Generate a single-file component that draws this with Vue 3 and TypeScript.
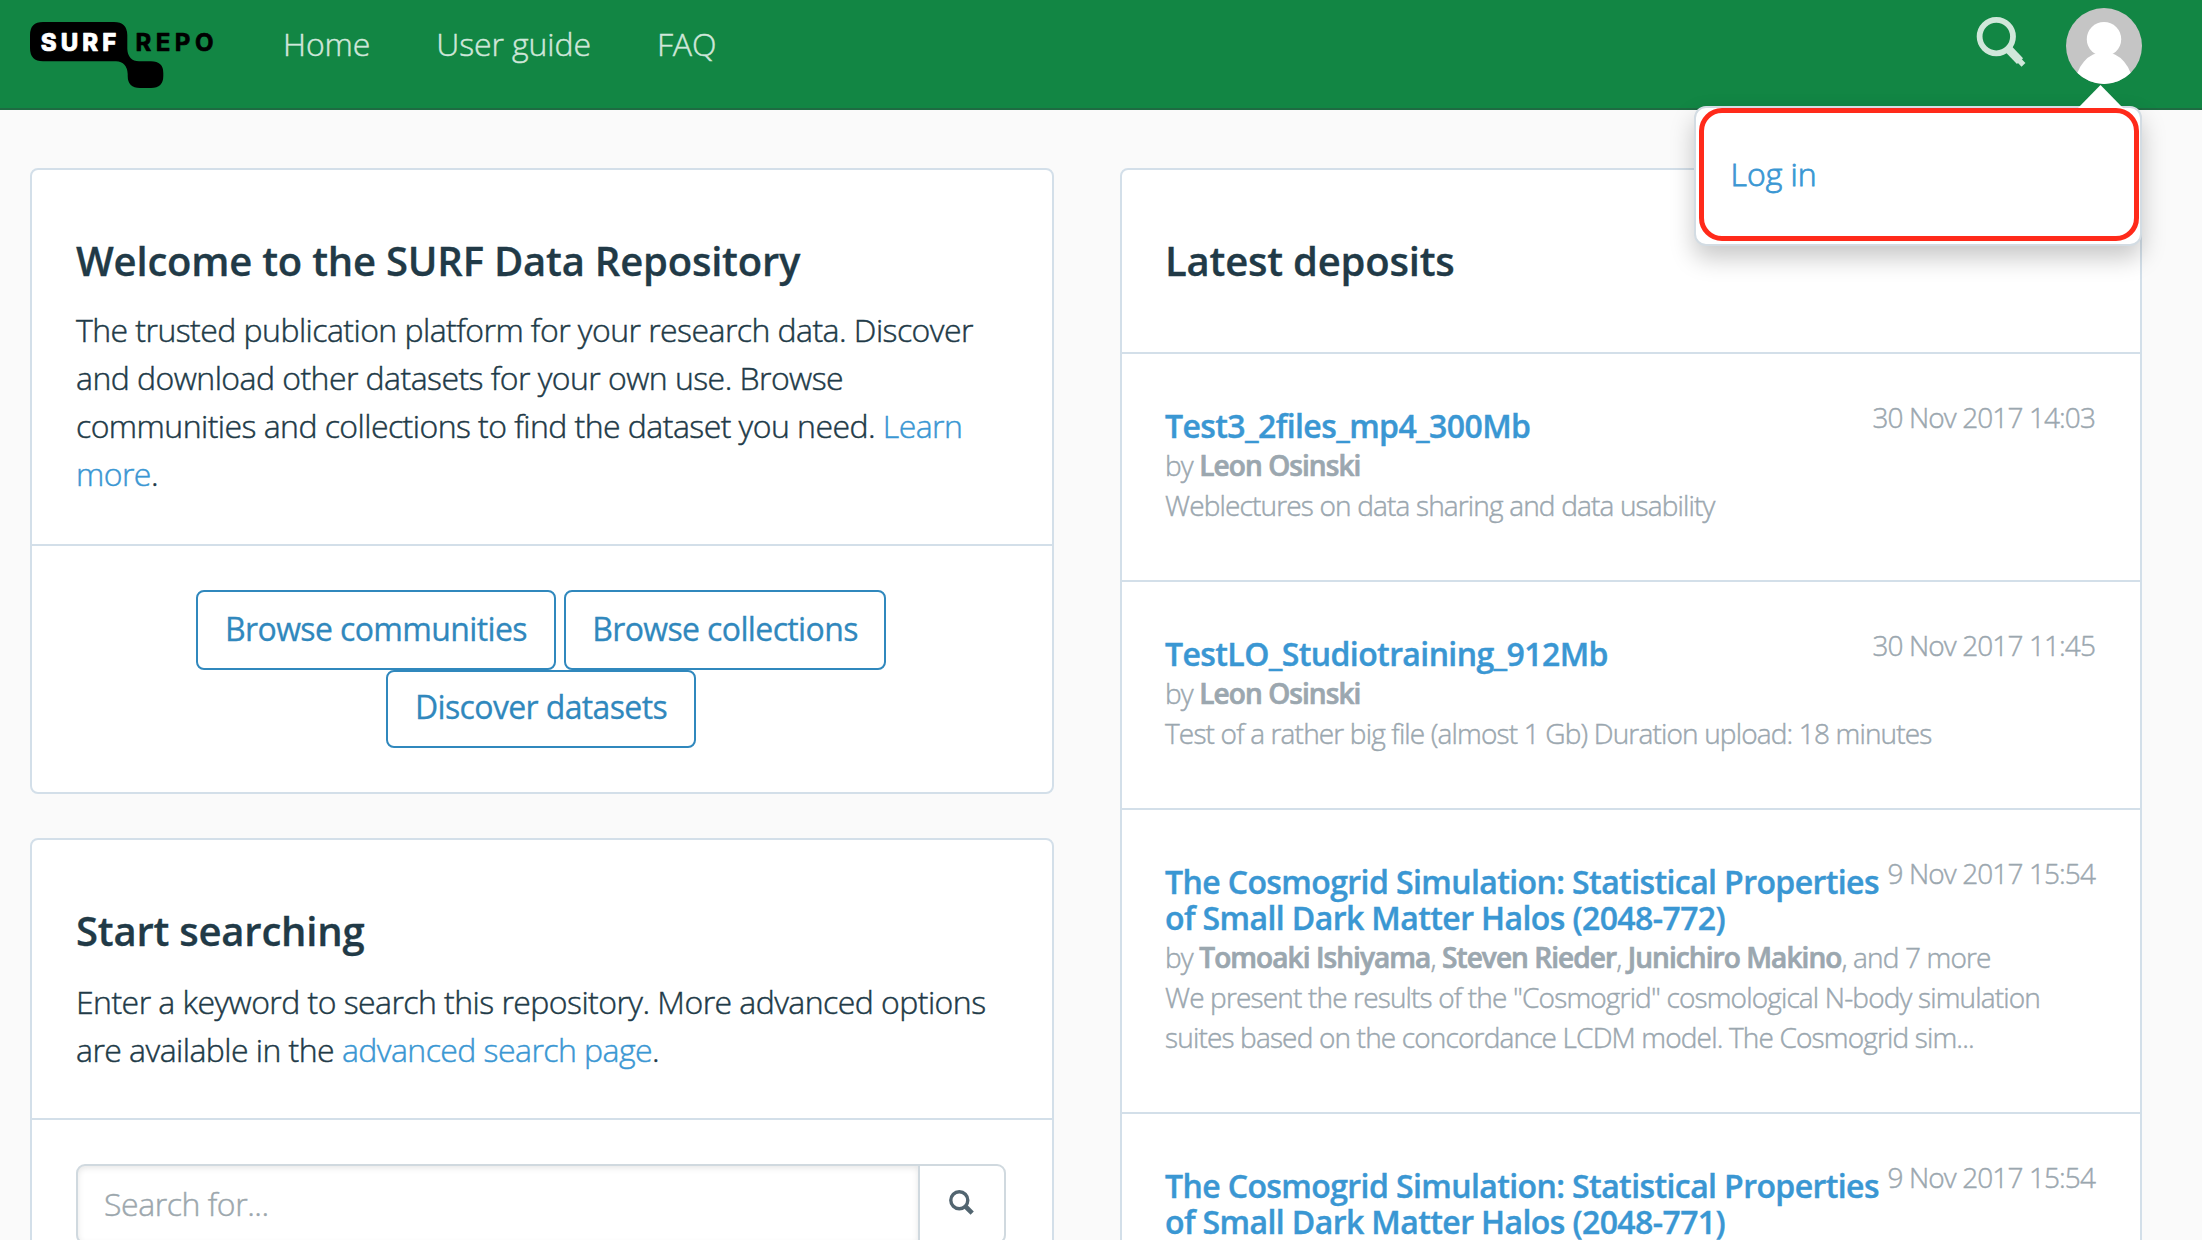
<script setup lang="ts">
interface Deposit {
  title: string[]
  date: string
  authors: string[]
  more?: string
  description: string[]
}

const navItems: string[] = ['Home', 'User guide', 'FAQ']

const abstract: string[] = [
  'We present the results of the "Cosmogrid" cosmological N-body simulation',
  'suites based on the concordance LCDM model. The Cosmogrid sim...',
]
const cosmogridAuthors: string[] = ['Tomoaki Ishiyama', 'Steven Rieder', 'Junichiro Makino']

const deposits: Deposit[] = [
  {
    title: ['Test3_2files_mp4_300Mb'],
    date: '30 Nov 2017 14:03',
    authors: ['Leon Osinski'],
    description: ['Weblectures on data sharing and data usability'],
  },
  {
    title: ['TestLO_Studiotraining_912Mb'],
    date: '30 Nov 2017 11:45',
    authors: ['Leon Osinski'],
    description: ['Test of a rather big file (almost 1 Gb) Duration upload: 18 minutes'],
  },
  {
    title: ['The Cosmogrid Simulation: Statistical Properties', 'of Small Dark Matter Halos (2048-772)'],
    date: '9 Nov 2017 15:54',
    authors: cosmogridAuthors,
    more: ', and 7 more',
    description: abstract,
  },
  {
    title: ['The Cosmogrid Simulation: Statistical Properties', 'of Small Dark Matter Halos (2048-771)'],
    date: '9 Nov 2017 15:54',
    authors: [],
    description: [],
  },
]
</script>

<template>
  <div class="page">
    <header class="navbar">
      <svg class="logo" width="190" height="70" viewBox="0 0 190 70" aria-label="SURF REPO">
        <path d="M13 0H84Q97 0 97.3 13V27Q98 39 109 39.3H121Q133.3 39.3 133.3 51V54Q133.3 66 121 66H110Q97.7 66 97.7 54V52Q97 40 86 39.3H13Q0 39.3 0 26V13Q0 0 13 0Z" />
        <text class="logo-surf" x="10.8" y="28.6" textLength="75.5" lengthAdjust="spacing">SURF</text>
        <text class="logo-repo" x="105.4" y="28.6" textLength="78" lengthAdjust="spacing">REPO</text>
      </svg>
      <nav class="nav">
        <a v-for="item in navItems" :key="item" class="nav-link">{{ item }}</a>
      </nav>
      <svg class="nav-search" width="52" height="52" viewBox="0 0 52 52">
        <g fill="none" stroke="#d0e7da">
          <circle cx="20.3" cy="20.6" r="16.7" stroke-width="5.8" />
          <path d="M31.5 32L44 45.2" stroke-width="8.4" />
          <path d="M43.4 44.6L45.6 46.9" stroke-width="5.4" stroke-linecap="square" stroke-linejoin="round" />
        </g>
      </svg>
      <div class="user">
        <svg class="avatar" width="76" height="76" viewBox="0 0 76 76">
          <defs><clipPath id="round"><circle cx="38" cy="38" r="38" /></clipPath></defs>
          <g clip-path="url(#round)">
            <rect width="76" height="76" fill="#c5c5c5" />
            <ellipse cx="38" cy="77" rx="28.5" ry="33" fill="#fff" />
            <circle cx="38" cy="31.2" r="17.2" fill="#fff" />
          </g>
        </svg>
        <div class="dropdown">
          <svg class="caret" width="46" height="24" viewBox="0 0 46 24"><path d="M0 24L22.5 1L45 24Z" fill="#fff" /></svg>
          <div class="highlight"><a class="login">Log in</a></div>
        </div>
      </div>
    </header>

    <main class="columns">
      <div class="left">
        <section class="card">
          <div class="card-head intro">
            <h2>Welcome to the SURF Data Repository</h2>
            <p>
              The trusted publication platform for your research data. Discover<br />and download other datasets for your own use. Browse<br />communities and collections to find the dataset you need. <a>Learn<br />more</a>.
            </p>
          </div>
          <div class="actions">
            <div class="row">
              <button class="btn communities">Browse communities</button>
              <button class="btn collections">Browse collections</button>
            </div>
            <button class="btn datasets">Discover datasets</button>
          </div>
        </section>
        <section class="card">
          <div class="card-head search-intro">
            <h2>Start searching</h2>
            <p>
              Enter a keyword to search this repository. More advanced options<br />are available in the <a>advanced search page</a>.
            </p>
          </div>
          <div class="search-body">
            <div class="search-box">
              <div class="search-field">Search for...</div>
              <div class="search-btn">
                <svg width="26" height="26" viewBox="0 0 26 26" fill="none" stroke="#526570">
                  <circle cx="10.3" cy="10.3" r="8.5" stroke-width="3.4" />
                  <path d="M16.5 16.5L23.2 23.2" stroke-width="4.6" />
                </svg>
              </div>
            </div>
          </div>
        </section>
      </div>

      <section class="card right">
        <div class="card-head latest"><h2>Latest deposits</h2></div>
        <article v-for="(d, i) in deposits" :key="i" class="deposit">
          <div class="deposit-top">
            <h4><span v-for="line in d.title" :key="line" class="line">{{ line }}</span></h4>
            <span class="date">{{ d.date }}</span>
          </div>
          <div v-if="d.authors.length" class="authors">by <template v-for="(a, j) in d.authors" :key="a"><template v-if="j > 0">, </template><strong>{{ a }}</strong></template>{{ d.more }}</div>
          <div class="description"><span v-for="line in d.description" :key="line" class="line">{{ line }}</span></div>
        </article>
      </section>
    </main>
  </div>
</template>

<style>
body {
  margin: 0;
  background: #fafafa;
  overflow: hidden;
}
</style>

<style scoped>
.page {
  width: 2202px;
  height: 1240px;
  overflow: hidden;
  background: #fafafa;
  color: #213a47;
  font-family: 'Open Sans', sans-serif;
  font-weight: 300;
  font-size: 32px;
  line-height: 48px;
}
.page * {
  box-sizing: border-box;
}
a {
  color: #3a97d3;
}
h2,
h4,
p {
  margin: 0;
  white-space: nowrap;
}
/* Light text is thickened slightly so it stays legible */
.card-head p,
.nav-link,
.search-field,
.date,
.authors,
.description {
  -webkit-text-stroke: 0.45px currentColor;
}
.card-head p a {
  -webkit-text-stroke: 0.45px #3a97d3;
}
.login {
  -webkit-text-stroke: 0.8px #3a97d3;
}

/* Navigation bar */
.navbar {
  display: flex;
  align-items: flex-start;
  height: 110px;
  padding-left: 30px;
  background: #128644;
  border-bottom: 2px solid #1e6b42;
}
.logo {
  margin-top: 22px;
  flex: none;
}
.logo text {
  font-family: Inter, sans-serif;
  font-size: 24px;
  stroke-linejoin: round;
  stroke-width: 0.7px;
}
.logo-surf {
  fill: #fff;
  stroke: #fff;
  font-weight: 800;
}
.logo-repo {
  fill: #000;
  stroke: #000;
  font-weight: 700;
}
.nav {
  display: flex;
  gap: 66px;
  margin: 20px 0 0 63px;
}
.nav-link {
  color: #d0e7da;
  letter-spacing: -0.1px;
  white-space: nowrap;
}
.nav-search {
  margin: 16px 38px 0 auto;
}
.user {
  position: relative;
  width: 76px;
  height: 76px;
  margin: 8px 60px 0 0;
}
.avatar {
  display: block;
}
.dropdown {
  position: absolute;
  top: 98px;
  right: 0;
  z-index: 5;
  width: 448px;
  height: 140px;
  padding: 0 2px 0 3px;
  background: #fff;
  border: 2px solid #d3dce3;
  border-radius: 12px;
  box-shadow: 0 12px 24px rgba(0, 0, 0, 0.22);
}
.caret {
  position: absolute;
  top: -24px;
  right: 16px;
}
.highlight {
  position: relative;
  width: 440px;
  height: 133px;
  padding: 37px 0 0 26.5px;
  border: 5px solid #ff2a1a;
  border-radius: 23px;
}
.login {
  display: block;
}

/* Page columns */
.columns {
  display: flex;
  align-items: flex-start;
  gap: 66px;
  padding: 58px 60px 0 30px;
}
.left {
  display: flex;
  flex-direction: column;
  gap: 44px;
  width: 1024px;
}
.card {
  background: #fff;
  border: 2px solid #d3dfe9;
  border-radius: 8px;
}
.right {
  width: 1022px;
}
.card-head {
  padding: 69px 44px 0;
  border-bottom: 2px solid #d3dfe9;
}
.card-head h2 {
  font-size: 40px;
  font-weight: 600;
  letter-spacing: -0.21px;
  line-height: 44px;
  -webkit-text-stroke: 0.3px currentColor;
}
.card-head p {
  margin-top: 23px;
  letter-spacing: -0.55px;
}
.intro {
  height: 376px;
}
.search-intro {
  height: 280px;
}
.search-intro p {
  margin-top: 25px;
}
.latest {
  height: 184px;
  padding-left: 43px;
}
.actions {
  display: flex;
  flex-direction: column;
  align-items: center;
  height: 246px;
  padding: 44px 2px 0 0;
}
.row {
  display: flex;
  gap: 8px;
}
.btn {
  height: 80px;
  padding: 0 0 3px;
  background: #fff;
  border: 2px solid #3088bd;
  border-radius: 8px;
  color: #3088bd;
  font: 400 32px/44px 'Open Sans', sans-serif;
  letter-spacing: -0.63px;
  -webkit-text-stroke: 0.3px currentColor;
  white-space: nowrap;
}
.communities {
  width: 360px;
}
.collections {
  width: 322px;
}
.datasets {
  width: 310px;
  height: 78px;
  padding-bottom: 4px;
}
.search-body {
  height: 170px;
  padding: 44px 46px 0 44px;
}
.search-box {
  display: flex;
  height: 80px;
  border: 2px solid #d0d9df;
  border-radius: 9px;
}
.search-field {
  flex: 1;
  padding: 14px 0 0 26px;
  border-radius: 7px 0 0 7px;
  box-shadow: inset 0 2px 6px rgba(0, 0, 0, 0.1);
  color: #9ca7ad;
  letter-spacing: -0.45px;
}
.search-btn {
  width: 86px;
  padding: 24px 0 0 29px;
  border-left: 2px solid #d0d9df;
}
.search-btn svg {
  display: block;
}

/* Deposits list */
.deposit {
  padding: 54px 45px 55px 43px;
  border-bottom: 2px solid #d3dfe9;
  font-size: 28px;
  letter-spacing: -0.84px;
  line-height: 40px;
  color: #9ba7af;
}
.deposit-top {
  display: flex;
  justify-content: space-between;
  align-items: flex-start;
  margin-bottom: 1px;
}
.line {
  display: block;
  white-space: nowrap;
}
h4 {
  color: #3a97d3;
  font-size: 32px;
  font-weight: 600;
  letter-spacing: -0.6px;
  line-height: 36px;
  -webkit-text-stroke: 0.4px currentColor;
}
.date {
  height: 20px;
  margin-top: -11px;
  letter-spacing: -0.9px;
  white-space: nowrap;
}
strong {
  font-weight: 600;
  letter-spacing: -0.93px;
  -webkit-text-stroke: 0.7px currentColor;
}
.authors {
  white-space: nowrap;
}
</style>
